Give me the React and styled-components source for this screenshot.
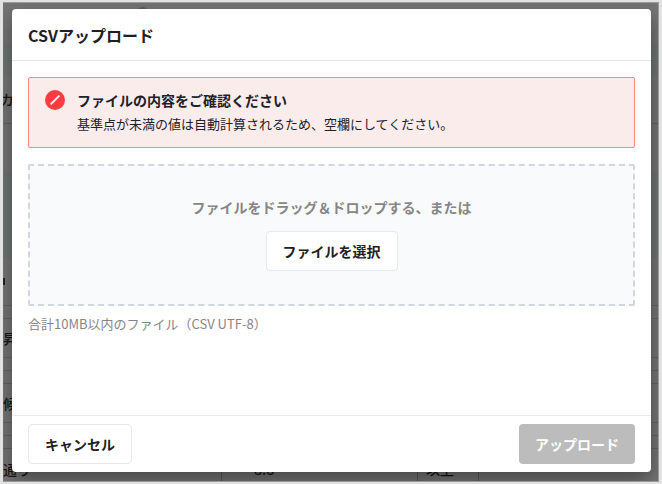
import { useRef } from "react";
import styled, { createGlobalStyle } from "styled-components";

const GlobalStyle=createGlobalStyle`
    *{
        box-sizing: border-box;
    }
    body{
        margin: 0;
        background-color: #e2e2e2;
        color: #1f2023;
        font-family: "Noto Sans CJK JP", "Noto Sans", sans-serif;
    }
    button{
        font-family: inherit;
    }
`;

//page and dialog share the single grid cell
const Screen=styled.div`
    display: grid;
    grid-template: minmax(0, 1fr) / minmax(0, 1fr);
    height: calc(100vh - 4px);
    margin: 2px 3px 2px 3px;
    overflow: hidden;
    border: 1px solid #999;
    border-left: none;
    background-color: #757575;
`;

const Page=styled.div`
    grid-area: 1 / 1;
    overflow: hidden;
    color: #161616;
    font-size: 14px;
    font-weight: 500;
    white-space: nowrap;
`;
const Strip=styled.div`
    display: flex;
    align-items: center;
    height: ${(props)=>props.$height}px;
    text-indent: ${(props)=>props.$indent || 0}px;
    background-color: ${(props)=>props.$tinted ? "#6f7472" : "transparent"};
    border-bottom: ${(props)=>props.$line ? "1px solid #656565" : "none"};
`;
const Toolbar=styled(Strip)`
    align-items: flex-start;
    padding: 4px 0 0 134px;
`;
const Dot=styled.span`
    width: 12px;
    height: 12px;
    border-radius: 50%;
    background-color: #5f5f5f;
`;
const Tick=styled.span`
    width: 2px;
    height: 7px;
    background-color: #222;
`;
const Cell=styled.span`
    width: ${(props)=>props.$width}px;
    line-height: 40px;
    padding-left: ${(props)=>props.$pad || 0}px;
    border-right: 1px solid #555;
`;

const Dialog=styled.section`
    grid-area: 1 / 1;
    z-index: 1;
    display: flex;
    flex-direction: column;
    margin: 6px 7px 9px 9px;
    border-radius: 4px;
    background-color: #fff;
    box-shadow: 0 8px 20px rgba(0, 0, 0, 0.4);
`;
const Header=styled.header`
    padding: 14px 16px 13px;
    border-bottom: 1px solid #e1e4e9;
`;
const Title=styled.h1`
    margin: 0;
    font-size: 16px;
    line-height: 24px;
    font-weight: 700;
`;
const Body=styled.div`
    flex: 1;
    padding: 16px;
`;
const Footer=styled.footer`
    display: flex;
    justify-content: space-between;
    padding: 8px 16px;
    border-top: 1px solid #ebebeb;
`;

const Alert=styled.div`
    display: flex;
    gap: 12px;
    padding: 10px 16px 11px;
    border: 1px solid #f98a8a;
    border-radius: 2px;
    background-color: #fbecec;
    color: #1d2129;
`;
const AlertIcon=styled.svg`
    flex: none;
    width: 20px;
    height: 20px;
    margin-top: 2px;
`;
const AlertTitle=styled.strong`
    display: block;
    font-size: 14px;
    line-height: 24px;
    font-weight: 700;
`;
const AlertText=styled.p`
    margin: 0;
    font-size: 13px;
    line-height: 24px;
`;

const DropZone=styled.div`
    display: flex;
    flex-direction: column;
    align-items: center;
    gap: 12px;
    margin-top: 16px;
    padding: 29px 16px 33px;
    border: 2px dashed #d1d7e0;
    border-radius: 2px;
    background-color: #f9fafc;
`;
const DropText=styled.span`
    color: #868686;
    font-size: 14px;
    line-height: 24px;
    font-weight: 700;
`;
const Hint=styled.p`
    margin: 8px 0 0;
    color: #868686;
    font-size: 13px;
    line-height: 20px;
`;

const Button=styled.button`
    height: 40px;
    padding: 0 16px;
    border: 1px solid #e6e9ee;
    border-radius: 4px;
    background-color: #fff;
    color: #1f2023;
    font-size: 14px;
    font-weight: 700;

    &:disabled{
        border: none;
        background-color: #bcbcbc;
        color: #fff;
    }
`;

const BackgroundPage=()=>{
    return (
        <Page aria-hidden="true">
            <Toolbar $height={40}><Dot /></Toolbar>
            <Strip $height={32} $tinted />
            <Strip $height={49} $indent={-3} $line>カ</Strip>
            <Strip $height={47} />
            <Strip $height={87} $tinted />
            <Strip $height={48} $line><Tick /></Strip>
            <Strip $height={13} $line />
            <Strip $height={39} $line>昇</Strip>
            <Strip $height={13} $line />
            <Strip $height={13} $line />
            <Strip $height={39} $line>候</Strip>
            <Strip $height={13} $line />
            <Strip $height={13} $line />
            <Strip $height={40}>
                <Cell $width={219}>通り</Cell>
                <Cell $width={17} />
                <Cell $width={179} $pad={15}>8.8</Cell>
                <Cell $width={61} $pad={8}>以上</Cell>
            </Strip>
        </Page>
    );
};

const ErrorIcon=()=>{
    return (
        <AlertIcon viewBox="0 0 20 20" aria-hidden="true">
            <circle cx="10" cy="10" r="10" fill="#fb3d3f" />
            <path d="M5.6 14.4 14.4 5.6" stroke="#fff" strokeWidth="1.8" />
        </AlertIcon>
    );
};

export default function App(){
    const fileInput=useRef(null);

    return (
        <>
            <GlobalStyle />
            <Screen>
                <BackgroundPage />
                <Dialog role="dialog" aria-modal="true" aria-labelledby="upload-title">
                    <Header>
                        <Title id="upload-title">CSVアップロード</Title>
                    </Header>
                    <Body>
                        <Alert role="alert">
                            <ErrorIcon />
                            <div>
                                <AlertTitle>ファイルの内容をご確認ください</AlertTitle>
                                <AlertText>基準点が未満の値は自動計算されるため、空欄にしてください。</AlertText>
                            </div>
                        </Alert>
                        <DropZone>
                            <DropText>ファイルをドラッグ＆ドロップする、または</DropText>
                            <Button type="button" onClick={()=>fileInput.current.click()}>ファイルを選択</Button>
                            <input ref={fileInput} type="file" accept=".csv" aria-label="ファイルを選択" hidden />
                        </DropZone>
                        <Hint>合計10MB以内のファイル（CSV UTF-8）</Hint>
                    </Body>
                    <Footer>
                        <Button type="button">キャンセル</Button>
                        <Button type="button" disabled>アップロード</Button>
                    </Footer>
                </Dialog>
            </Screen>
        </>
    );
}
